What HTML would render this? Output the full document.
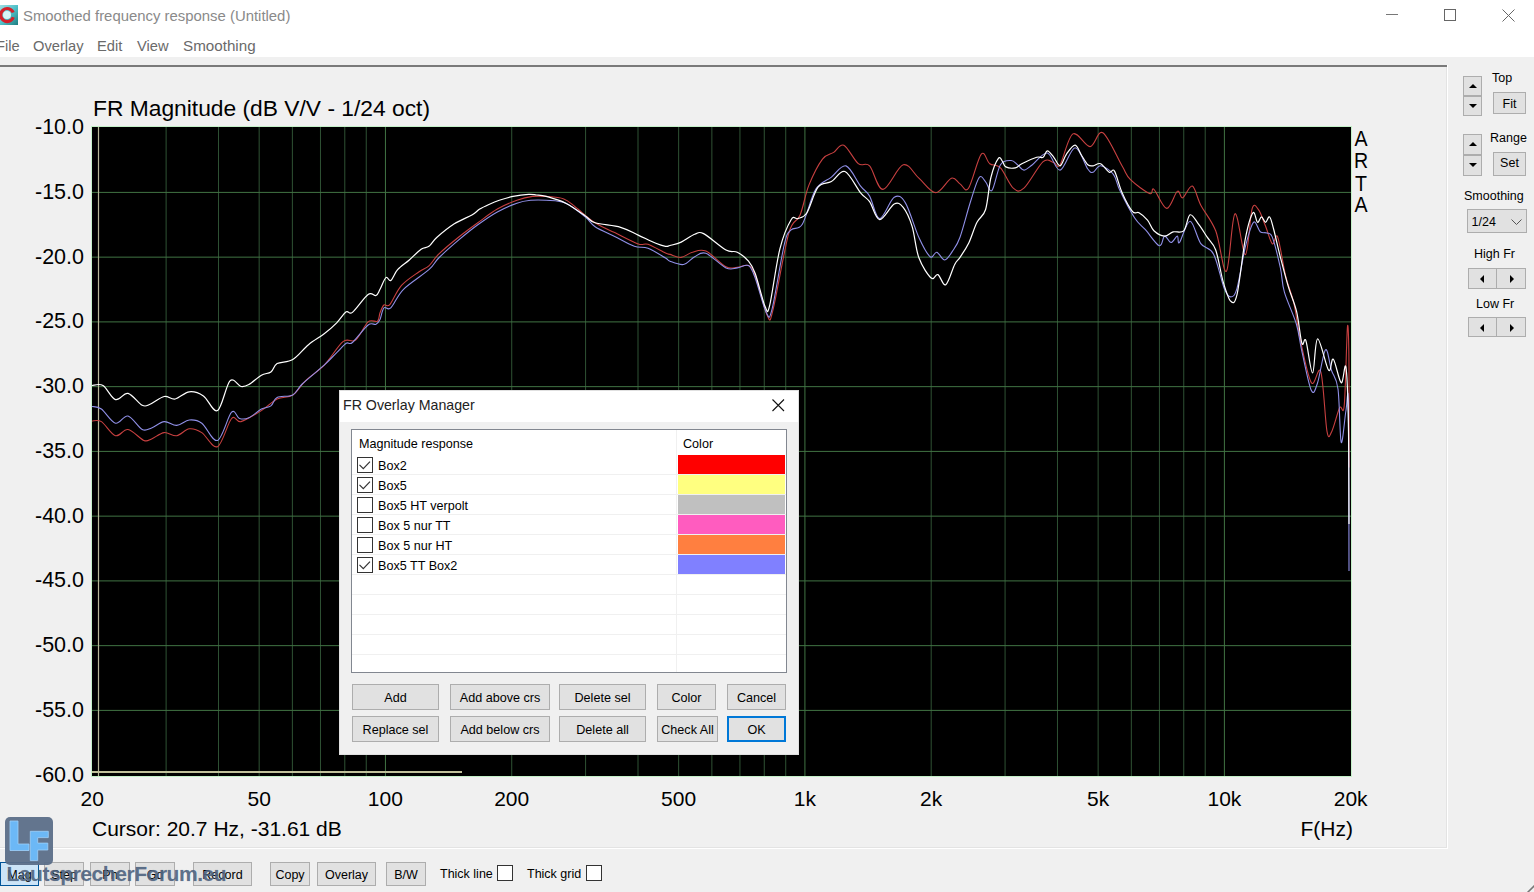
<!DOCTYPE html>
<html><head><meta charset="utf-8">
<style>
*{margin:0;padding:0;box-sizing:border-box}
html,body{width:1534px;height:892px;overflow:hidden}
body{position:relative;background:#f0f0f0;font-family:"Liberation Sans",sans-serif;color:#000}
.a{position:absolute;white-space:nowrap}
#top{position:absolute;left:0;top:0;width:1534px;height:57px;background:#fff}
.menu{position:absolute;top:37px;font-size:14.7px;color:#6a6a6a;line-height:18px}
.yl{position:absolute;left:0;width:84px;text-align:right;font-size:21.5px;line-height:25px}
.xl{position:absolute;top:786px;width:80px;text-align:center;font-size:21px;line-height:25px}
.pbtn{position:absolute;background:#e1e1e1;border:1px solid #adadad;font-size:12.5px;text-align:center;line-height:19px}
.spin{position:absolute;background:#e1e1e1;border:1px solid #adadad}
.tri-up{position:absolute;left:5px;top:7px;width:0;height:0;border-left:4px solid transparent;border-right:4px solid transparent;border-bottom:4px solid #000}
.tri-dn{position:absolute;left:5px;top:7px;width:0;height:0;border-left:4px solid transparent;border-right:4px solid transparent;border-top:4px solid #000}
.tri-l{position:absolute;top:5.5px;width:0;height:0;border-top:4.5px solid transparent;border-bottom:4.5px solid transparent;border-right:4.5px solid #000}
.tri-r{position:absolute;top:5.5px;width:0;height:0;border-top:4.5px solid transparent;border-bottom:4.5px solid transparent;border-left:4.5px solid #000}
.rl{position:absolute;font-size:12.5px;line-height:16px;color:#000}
.tb{position:absolute;top:862px;height:24px;background:#e1e1e1;border:1px solid #adadad;font-size:12.5px;text-align:center;line-height:24px}
#dlg{position:absolute;left:339px;top:390px;width:460px;height:365px;background:#f0f0f0;border:1px solid #e0e0e0}
#dlgt{position:absolute;left:0;top:0;width:458px;height:31px;background:#fff}
#lv{position:absolute;left:11px;top:38px;width:436px;height:244px;background:#fff;border:1px solid #828790;overflow:hidden}
.sw{position:absolute;left:326px;width:107px;height:19px}
.cb{position:absolute;left:5px;width:16px;height:16px;border:1px solid #333;background:#fff}
.rt{position:absolute;left:26px;font-size:12.6px;line-height:16px}
.rs{position:absolute;left:0;width:434px;height:1px;background:#f0f0f0}
.db{position:absolute;height:26px;background:#e1e1e1;border:1px solid #adadad;font-size:12.6px;text-align:center;line-height:27px}
</style></head><body>
<div id="top"></div>
<svg class="a" style="left:0;top:5px" width="18" height="20" viewBox="0 0 18 20">
<defs><linearGradient id="ig" x1="0" y1="0" x2="1" y2="1"><stop offset="0" stop-color="#9fe0e6"/><stop offset="0.5" stop-color="#4fc0c8"/><stop offset="1" stop-color="#1f7c80"/></linearGradient></defs>
<rect x="0" y="0" width="18" height="20" fill="url(#ig)"/>
<circle cx="7" cy="10" r="4" fill="#d8f4f6"/>
<path d="M13.2 7.5 A6.5 6.5 0 1 0 13.3 12.3" fill="none" stroke="#d4202a" stroke-width="3.2"/>
</svg>
<div class="a" style="left:23px;top:7px;font-size:14.9px;line-height:18px;color:#8a8a8a">Smoothed frequency response (Untitled)</div>
<svg class="a" style="left:1380px;top:8px" width="140" height="16">
<line x1="6" y1="6.5" x2="18" y2="6.5" stroke="#777" stroke-width="1"/>
<rect x="64.5" y="1.5" width="11" height="11" fill="none" stroke="#666" stroke-width="1"/>
<path d="M122.5 1.5 L134.5 13.5 M134.5 1.5 L122.5 13.5" stroke="#666" stroke-width="1"/>
</svg>
<div class="menu" style="left:-4px">File</div>
<div class="menu" style="left:33px">Overlay</div>
<div class="menu" style="left:97px">Edit</div>
<div class="menu" style="left:137px">View</div>
<div class="menu" style="left:183px;font-size:15.2px">Smoothing</div>
<!-- panel frame -->
<div class="a" style="left:0;top:65px;width:1447px;height:2px;background:#7a7a7a"></div>
<div class="a" style="left:1447px;top:65px;width:1px;height:784px;background:#fff"></div>
<div class="a" style="left:1446px;top:67px;width:1px;height:781px;background:#e3e3e3"></div>
<div class="a" style="left:0;top:848px;width:1448px;height:1px;background:#fff"></div>
<div class="a" style="left:0;top:847px;width:1447px;height:1px;background:#e3e3e3"></div>

<div class="a" style="left:93px;top:94px;font-size:22.8px;line-height:28px">FR Magnitude (dB V/V - 1/24 oct)</div>
<div class="yl" style="top:115.2px">-10.0</div><div class="yl" style="top:179.9px">-15.0</div><div class="yl" style="top:244.6px">-20.0</div><div class="yl" style="top:309.4px">-25.0</div><div class="yl" style="top:374.1px">-30.0</div><div class="yl" style="top:438.9px">-35.0</div><div class="yl" style="top:503.6px">-40.0</div><div class="yl" style="top:568.4px">-45.0</div><div class="yl" style="top:633.1px">-50.0</div><div class="yl" style="top:697.9px">-55.0</div><div class="yl" style="top:762.6px">-60.0</div>
<div class="xl" style="left:52.2px">20</div><div class="xl" style="left:219.2px">50</div><div class="xl" style="left:345.4px">100</div><div class="xl" style="left:471.7px">200</div><div class="xl" style="left:638.6px">500</div><div class="xl" style="left:764.9px">1k</div><div class="xl" style="left:891.2px">2k</div><div class="xl" style="left:1058.1px">5k</div><div class="xl" style="left:1184.4px">10k</div><div class="xl" style="left:1310.7px">20k</div>
<div class="a" style="left:92px;top:816px;font-size:21px;line-height:25px">Cursor: 20.7 Hz, -31.61 dB</div>
<div class="a" style="left:1300.5px;top:816px;font-size:21px;line-height:25px">F(Hz)</div>
<div class="a" style="left:1352.5px;top:127.8px;font-size:21.3px;line-height:21.8px;width:16px;text-align:center;white-space:normal;transform:scale(0.92,1.03);transform-origin:50% 0">A<br>R<br>T<br>A</div>

<svg class="a" style="left:0;top:0" width="1534" height="892">
<rect x="91.5" y="126.5" width="1260" height="650" fill="#000" stroke="#c4f0c8" stroke-width="1"/>
<g stroke="#2f5234" stroke-width="1"><line x1="166.11" y1="127" x2="166.11" y2="776"/><line x1="218.52" y1="127" x2="218.52" y2="776"/><line x1="259.17" y1="127" x2="259.17" y2="776"/><line x1="292.38" y1="127" x2="292.38" y2="776"/><line x1="320.47" y1="127" x2="320.47" y2="776"/><line x1="344.79" y1="127" x2="344.79" y2="776"/><line x1="366.25" y1="127" x2="366.25" y2="776"/><line x1="511.72" y1="127" x2="511.72" y2="776"/><line x1="585.59" y1="127" x2="585.59" y2="776"/><line x1="638.00" y1="127" x2="638.00" y2="776"/><line x1="678.65" y1="127" x2="678.65" y2="776"/><line x1="711.86" y1="127" x2="711.86" y2="776"/><line x1="739.95" y1="127" x2="739.95" y2="776"/><line x1="764.27" y1="127" x2="764.27" y2="776"/><line x1="785.73" y1="127" x2="785.73" y2="776"/><line x1="931.20" y1="127" x2="931.20" y2="776"/><line x1="1005.07" y1="127" x2="1005.07" y2="776"/><line x1="1057.48" y1="127" x2="1057.48" y2="776"/><line x1="1098.13" y1="127" x2="1098.13" y2="776"/><line x1="1131.34" y1="127" x2="1131.34" y2="776"/><line x1="1159.43" y1="127" x2="1159.43" y2="776"/><line x1="1183.75" y1="127" x2="1183.75" y2="776"/><line x1="1205.21" y1="127" x2="1205.21" y2="776"/></g>
<g stroke="#417444" stroke-width="1"><line x1="385.44" y1="127" x2="385.44" y2="776"/><line x1="804.92" y1="127" x2="804.92" y2="776"/><line x1="1224.40" y1="127" x2="1224.40" y2="776"/><line x1="92" y1="192.40" x2="1351" y2="192.40"/><line x1="92" y1="257.15" x2="1351" y2="257.15"/><line x1="92" y1="321.90" x2="1351" y2="321.90"/><line x1="92" y1="386.65" x2="1351" y2="386.65"/><line x1="92" y1="451.40" x2="1351" y2="451.40"/><line x1="92" y1="516.15" x2="1351" y2="516.15"/><line x1="92" y1="580.90" x2="1351" y2="580.90"/><line x1="92" y1="645.65" x2="1351" y2="645.65"/><line x1="92" y1="710.40" x2="1351" y2="710.40"/></g>
<line x1="98.5" y1="127" x2="98.5" y2="776" stroke="#b8b898" stroke-width="1.2"/>
<line x1="92" y1="772" x2="462" y2="772" stroke="#c0c09a" stroke-width="2"/>
<path fill="none" stroke="#c84040" stroke-width="1.1" d="M92.0 421.0 C93.6 421.1 97.5 419.2 101.4 421.6 C105.3 424.1 111.1 434.4 115.5 435.7 C119.9 437.0 123.3 428.7 128.0 429.5 C132.7 430.3 139.9 438.8 143.8 440.4 C147.7 442.0 148.2 440.2 151.6 438.9 C155.0 437.6 160.0 433.1 164.2 432.6 C168.4 432.1 172.5 436.3 176.7 435.7 C180.9 435.1 185.1 429.3 189.3 428.8 C193.5 428.3 197.1 429.6 201.8 432.6 C206.5 435.6 212.5 449.1 217.5 446.7 C222.5 444.3 227.7 422.7 231.6 418.5 C235.5 414.3 236.0 422.9 241.0 421.6 C246.0 420.3 255.4 414.4 261.4 410.6 C267.4 406.8 271.9 401.6 277.1 399.0 C282.3 396.4 288.1 398.0 292.8 395.0 C297.5 392.0 300.2 385.8 305.4 380.8 C310.6 375.8 317.9 371.6 324.2 365.1 C330.5 358.6 337.8 345.8 343.0 341.6 C348.2 337.4 351.4 343.3 355.6 340.0 C359.8 336.7 364.5 324.9 368.1 321.8 C371.8 318.7 375.5 322.7 377.5 321.2 C379.5 319.7 378.9 315.5 380.0 312.8 C381.1 310.1 382.3 306.4 383.9 305.0 C385.5 303.6 386.9 307.9 389.8 304.6 C392.7 301.3 396.6 290.9 401.5 285.4 C406.4 279.9 414.5 275.0 419.1 271.7 C423.7 268.4 425.6 268.7 428.9 265.8 C432.2 262.9 433.8 258.8 438.7 254.1 C443.6 249.4 451.7 242.7 458.2 237.5 C464.7 232.3 471.3 227.5 477.8 222.8 C484.3 218.1 490.8 212.8 497.3 209.1 C503.8 205.3 511.0 202.4 516.9 200.3 C522.8 198.2 527.7 197.1 532.6 196.4 C537.5 195.8 541.0 196.0 546.2 196.4 C551.4 196.8 558.9 197.1 563.8 198.9 C568.7 200.7 570.4 203.2 575.6 207.2 C580.8 211.2 588.6 218.6 595.1 222.8 C601.6 227.0 607.5 229.1 614.7 232.6 C621.9 236.1 632.7 241.9 638.2 243.9 C643.8 245.9 643.5 242.8 648.0 244.3 C652.5 245.8 661.8 251.4 665.5 253.1 C669.2 254.8 667.4 253.7 670.0 254.4 C672.6 255.1 677.5 257.8 681.2 257.4 C684.9 257.0 688.3 253.2 692.4 252.2 C696.5 251.1 700.3 248.7 705.9 251.1 C711.5 253.5 720.8 264.1 726.0 266.8 C731.2 269.5 733.5 267.4 737.3 267.2 C741.0 267.0 745.5 264.2 748.5 265.6 C751.5 267.0 752.0 267.3 755.2 275.7 C758.4 284.1 764.5 310.5 767.5 316.1 C770.5 321.7 769.6 323.2 773.1 309.4 C776.6 295.6 784.3 248.8 788.8 233.1 C793.3 217.4 796.6 223.2 800.0 215.2 C803.4 207.2 805.2 194.2 809.0 184.9 C812.8 175.6 818.4 164.5 822.5 159.1 C826.6 153.7 830.2 154.7 833.7 152.4 C837.2 150.1 839.7 143.3 843.8 145.2 C847.9 147.1 854.0 160.1 858.3 163.6 C862.6 167.1 865.5 161.6 869.6 165.9 C873.7 170.2 877.4 189.6 883.0 189.4 C888.6 189.2 897.2 166.7 903.2 164.8 C909.2 162.9 913.5 173.5 918.9 178.2 C924.3 182.9 930.3 192.8 935.7 192.8 C941.1 192.8 947.4 179.7 951.4 178.2 C955.4 176.7 957.1 182.2 960.0 183.9 C962.9 185.6 965.0 193.2 968.5 188.2 C972.0 183.2 977.8 158.2 981.3 154.1 C984.8 150.0 986.6 161.4 989.8 163.7 C993.0 166.0 996.6 163.8 1000.5 167.9 C1004.4 172.0 1009.4 184.8 1013.3 188.2 C1017.2 191.6 1018.9 192.6 1023.9 188.2 C1028.9 183.8 1038.1 165.9 1043.1 161.6 C1048.1 157.3 1051.0 162.1 1053.8 162.6 C1056.6 163.1 1056.9 169.5 1060.1 164.7 C1063.3 159.9 1067.9 136.9 1072.9 133.9 C1077.9 130.9 1085.0 146.8 1090.0 146.6 C1095.0 146.4 1097.5 129.6 1102.8 132.8 C1108.1 136.0 1117.4 158.0 1122.0 165.8 C1126.6 173.6 1125.9 175.1 1130.5 179.7 C1135.1 184.3 1145.7 191.9 1149.6 193.5 C1153.5 195.1 1151.1 186.8 1153.9 189.3 C1156.8 191.8 1162.8 208.1 1166.7 208.4 C1170.6 208.8 1174.6 193.2 1177.3 191.4 C1180.0 189.6 1180.2 198.7 1182.7 197.8 C1185.2 196.9 1189.3 184.9 1192.3 186.1 C1195.3 187.3 1196.9 197.8 1200.8 205.2 C1204.7 212.6 1211.4 219.8 1215.7 230.8 C1220.0 241.8 1223.2 274.1 1226.4 271.3 C1229.6 268.5 1231.7 216.6 1234.9 213.8 C1238.1 211.0 1242.5 255.4 1245.4 254.6 C1248.3 253.8 1249.9 216.2 1252.1 208.8 C1254.3 201.4 1256.5 207.3 1258.8 210.2 C1261.0 213.1 1263.3 220.7 1265.6 226.3 C1267.8 231.9 1270.3 242.0 1272.3 243.8 C1274.3 245.6 1275.5 231.7 1277.7 237.1 C1279.9 242.5 1283.0 265.1 1285.7 276.1 C1288.4 287.1 1291.3 292.2 1293.8 303.0 C1296.3 313.8 1297.6 327.4 1300.5 340.7 C1303.4 354.0 1308.0 377.6 1311.4 382.8 C1314.8 388.0 1318.2 363.7 1320.8 371.8 C1323.4 379.9 1325.2 421.5 1327.0 431.4 C1328.8 441.3 1329.7 435.3 1331.8 431.4 C1333.9 427.5 1337.5 412.2 1339.6 407.8 C1341.7 403.4 1343.0 418.3 1344.3 404.7 C1345.6 391.1 1346.7 332.6 1347.5 326.3 C1348.3 320.0 1348.8 343.5 1349.0 367.0 C1349.2 390.5 1349.0 450.8 1349.0 467.5"/>
<path fill="none" stroke="#9090e8" stroke-width="1.1" d="M92.0 406.5 C93.6 406.9 97.5 406.2 101.4 409.0 C105.3 411.8 111.1 422.0 115.5 423.2 C119.9 424.4 123.5 414.9 128.0 416.0 C132.4 417.1 138.3 427.5 142.2 429.5 C146.1 431.5 147.9 429.2 151.6 427.9 C155.3 426.6 160.0 422.0 164.2 421.6 C168.4 421.2 172.5 425.7 176.7 425.4 C180.9 425.1 185.1 420.4 189.3 420.0 C193.5 419.6 197.1 419.8 201.8 423.2 C206.5 426.6 212.5 442.2 217.5 440.4 C222.5 438.6 227.9 415.8 231.6 412.2 C235.3 408.6 236.6 417.6 239.5 418.5 C242.4 419.4 245.2 419.4 248.9 417.8 C252.6 416.2 257.7 411.0 261.4 409.0 C265.1 407.0 268.3 407.8 270.9 405.9 C273.5 404.0 273.5 399.2 277.1 397.4 C280.8 395.6 288.6 397.1 292.8 394.9 C297.0 392.7 297.0 389.0 302.2 384.0 C307.4 379.0 318.4 370.3 324.2 365.1 C329.9 359.9 333.0 356.2 336.7 352.6 C340.4 349.0 343.6 344.9 346.2 343.2 C348.8 341.5 348.8 345.5 352.4 342.5 C356.0 339.5 364.2 328.0 368.1 325.0 C372.0 322.0 374.0 325.2 376.0 324.3 C378.0 323.4 378.7 322.3 380.0 319.6 C381.3 316.9 382.1 309.8 383.9 307.9 C385.7 305.9 387.5 311.0 390.8 307.9 C394.1 304.8 397.1 295.7 403.5 289.3 C409.9 282.9 423.0 274.9 428.9 269.7 C434.8 264.5 433.8 262.9 438.7 258.0 C443.6 253.1 451.7 245.9 458.2 240.4 C464.7 234.9 471.3 229.5 477.8 224.8 C484.3 220.1 490.8 215.6 497.3 212.0 C503.8 208.4 511.3 205.1 516.9 203.2 C522.4 201.2 525.7 200.8 530.6 200.3 C535.5 199.8 540.3 199.8 546.2 200.3 C552.1 200.8 559.3 200.4 565.8 203.2 C572.3 206.0 580.5 213.1 585.4 217.0 C590.3 220.9 590.2 223.4 595.1 226.7 C600.0 229.9 608.2 233.2 614.7 236.5 C621.2 239.8 628.8 244.4 634.3 246.3 C639.8 248.2 642.8 246.2 648.0 248.2 C653.2 250.1 661.8 255.8 665.5 258.0 C669.2 260.2 667.0 260.1 670.0 261.2 C673.0 262.3 679.4 265.2 683.5 264.5 C687.6 263.8 691.0 258.6 694.7 256.7 C698.4 254.8 700.7 251.4 705.9 253.3 C711.1 255.2 720.8 265.5 726.0 267.9 C731.2 270.3 733.5 268.3 737.3 267.9 C741.0 267.5 745.5 263.9 748.5 265.6 C751.5 267.3 752.2 270.1 755.2 278.0 C758.2 285.9 763.6 307.5 766.4 312.7 C769.2 317.9 769.0 320.8 772.0 309.4 C775.0 298.0 781.1 257.6 784.3 244.3 C787.5 231.0 788.1 233.2 791.1 229.8 C794.1 226.5 798.2 230.9 802.3 224.2 C806.4 217.5 810.9 197.2 815.7 189.4 C820.6 181.6 826.4 181.0 831.4 177.1 C836.4 173.2 841.1 164.4 846.0 165.9 C850.9 167.4 856.7 181.1 860.6 186.1 C864.5 191.1 866.4 190.7 869.6 196.1 C872.8 201.5 875.5 218.4 879.6 218.6 C883.7 218.8 889.9 199.9 894.2 197.3 C898.5 194.7 901.3 196.2 905.4 202.9 C909.5 209.6 914.8 228.6 918.9 237.6 C923.0 246.6 927.1 254.3 930.1 256.7 C933.1 259.1 934.4 251.6 936.8 252.2 C939.2 252.8 942.1 260.2 944.7 260.0 C947.3 259.8 950.0 254.9 952.5 251.1 C955.0 247.3 957.0 245.5 960.0 237.2 C963.0 228.8 967.5 210.9 970.7 201.0 C973.9 191.1 976.7 180.7 979.2 177.5 C981.7 174.3 983.5 179.7 985.6 181.8 C987.7 183.9 989.5 193.2 992.0 190.3 C994.5 187.5 997.3 169.7 1000.5 164.7 C1003.7 159.7 1008.3 160.5 1011.1 160.5 C1013.9 160.5 1015.4 163.1 1017.5 164.7 C1019.6 166.3 1021.4 170.1 1023.9 170.1 C1026.4 170.1 1028.5 167.5 1032.4 164.7 C1036.3 161.8 1042.8 152.1 1047.4 153.0 C1052.0 153.9 1055.5 171.0 1060.1 170.1 C1064.7 169.2 1070.5 147.9 1075.1 147.7 C1079.7 147.5 1084.8 164.9 1087.8 169.0 C1090.8 173.1 1091.1 172.7 1093.2 172.2 C1095.3 171.7 1097.2 165.5 1100.6 165.8 C1104.0 166.2 1110.2 170.2 1113.4 174.3 C1116.6 178.4 1116.2 183.0 1119.8 190.3 C1123.3 197.6 1130.4 211.4 1134.7 218.0 C1139.0 224.6 1141.3 225.1 1145.4 229.7 C1149.5 234.3 1156.0 244.6 1159.2 245.7 C1162.4 246.8 1162.6 236.6 1164.6 236.1 C1166.6 235.6 1168.9 242.5 1171.0 242.5 C1173.1 242.5 1175.9 236.1 1177.3 236.1 C1178.7 236.1 1177.4 245.0 1179.5 242.5 C1181.6 240.0 1186.5 221.0 1190.1 221.2 C1193.6 221.4 1196.9 238.1 1200.8 243.6 C1204.7 249.1 1209.7 246.8 1213.6 254.2 C1217.5 261.6 1221.4 281.2 1224.2 288.3 C1227.0 295.4 1228.5 296.9 1230.6 296.9 C1232.7 296.9 1234.5 296.7 1237.0 288.3 C1239.5 279.9 1242.7 257.5 1245.4 246.5 C1248.2 235.5 1251.0 224.8 1253.5 222.3 C1256.0 219.8 1258.0 229.9 1260.2 231.7 C1262.4 233.5 1264.9 232.1 1266.9 233.0 C1268.9 233.9 1270.0 231.3 1272.3 237.1 C1274.5 242.9 1278.4 258.8 1280.4 268.0 C1282.4 277.2 1281.7 282.8 1284.4 292.2 C1287.1 301.6 1293.6 314.6 1296.5 324.5 C1299.4 334.4 1299.4 340.4 1301.9 351.4 C1304.4 362.4 1308.8 385.4 1311.4 390.6 C1314.0 395.8 1315.2 389.5 1317.6 382.7 C1319.9 375.9 1323.2 351.9 1325.5 349.8 C1327.8 347.7 1329.4 363.8 1331.5 370.3 C1333.6 376.8 1336.4 377.0 1338.0 389.0 C1339.6 401.0 1339.9 438.7 1341.2 442.4 C1342.5 446.1 1344.7 417.3 1345.9 411.0 C1347.1 404.7 1347.9 378.0 1348.4 404.7 C1348.9 431.4 1348.9 543.3 1349.0 571.0"/>
<path fill="none" stroke="#ffffff" stroke-width="1.2" d="M92.0 385.5 C93.8 385.5 99.1 383.1 103.0 385.5 C106.9 387.9 111.3 398.3 115.5 399.6 C119.7 400.9 123.5 392.4 128.0 393.4 C132.4 394.3 138.5 403.5 142.2 405.3 C145.9 407.1 146.3 405.8 150.0 404.3 C153.7 402.8 160.0 397.4 164.2 396.5 C168.4 395.6 171.0 399.8 175.2 399.0 C179.4 398.2 184.6 392.3 189.3 391.8 C194.0 391.3 198.7 392.8 203.4 395.9 C208.1 399.0 213.1 413.1 217.5 410.6 C221.9 408.1 226.1 384.8 230.0 380.8 C233.9 376.8 237.8 385.9 241.0 386.5 C244.2 387.1 245.5 386.5 248.9 384.6 C252.3 382.7 257.7 377.3 261.4 375.2 C265.1 373.1 268.3 373.9 270.9 372.0 C273.5 370.1 273.5 365.7 277.1 363.6 C280.8 361.5 287.6 362.6 292.8 359.5 C298.0 356.4 303.3 349.0 308.5 344.7 C313.7 340.4 319.5 337.4 324.2 333.8 C328.9 330.2 333.0 326.5 336.7 322.8 C340.4 319.1 343.6 313.5 346.2 311.8 C348.8 310.1 348.8 315.3 352.4 312.4 C356.0 309.5 364.2 297.3 368.1 294.5 C372.0 291.7 374.0 296.4 376.0 295.5 C378.0 294.6 378.4 292.3 380.0 289.3 C381.6 286.3 384.1 279.1 385.9 277.6 C387.7 276.1 388.9 281.8 390.8 280.5 C392.8 279.2 394.5 273.1 397.6 269.7 C400.7 266.3 405.4 263.4 409.3 260.0 C413.2 256.6 417.8 251.5 421.1 249.2 C424.4 246.9 426.3 248.2 428.9 246.3 C431.5 244.4 432.5 241.2 436.7 237.5 C440.9 233.8 448.4 227.6 454.3 223.8 C460.2 220.1 467.7 217.4 471.9 215.0 C476.1 212.6 476.8 210.9 479.7 209.1 C482.6 207.3 486.2 205.7 489.5 204.2 C492.8 202.7 495.4 201.6 499.3 200.3 C503.2 199.0 508.1 197.4 513.0 196.4 C517.9 195.4 524.7 194.6 528.6 194.4 C532.5 194.2 533.6 194.7 536.5 195.0 C539.4 195.3 541.3 195.0 546.2 196.4 C551.1 197.8 559.3 199.9 565.8 203.2 C572.3 206.5 580.5 212.7 585.4 216.0 C590.3 219.3 589.2 220.9 595.1 222.8 C601.0 224.7 613.4 225.2 620.6 227.3 C627.8 229.4 632.3 232.4 638.2 235.1 C644.1 237.8 651.2 241.4 655.8 243.3 C660.3 245.2 663.1 245.9 665.5 246.3 C667.9 246.7 667.4 246.2 670.0 245.5 C672.6 244.8 677.1 244.0 681.2 242.1 C685.3 240.2 691.0 235.7 694.7 234.3 C698.4 232.9 698.4 231.0 703.6 233.6 C708.8 236.2 720.4 246.9 726.0 250.0 C731.6 253.1 733.5 250.3 737.3 252.2 C741.0 254.1 745.5 257.6 748.5 261.2 C751.5 264.8 752.4 265.9 755.2 273.5 C758.0 281.1 762.9 301.9 765.3 307.1 C767.7 312.3 767.4 314.6 769.8 304.9 C772.2 295.2 776.3 263.0 779.9 248.8 C783.5 234.6 788.1 224.7 791.1 219.7 C794.1 214.7 795.2 219.7 797.8 218.6 C800.4 217.5 803.4 218.2 806.8 213.0 C810.2 207.8 813.9 192.4 818.0 187.2 C822.1 182.0 826.9 184.2 831.4 181.6 C835.9 179.0 840.0 169.6 844.9 171.5 C849.8 173.4 856.5 187.8 860.6 192.8 C864.7 197.8 866.4 197.2 869.6 201.7 C872.8 206.2 875.5 219.3 879.6 219.7 C883.7 220.1 890.3 206.1 894.2 204.0 C898.1 201.9 900.2 203.7 903.2 207.4 C906.2 211.1 909.5 218.0 912.1 226.4 C914.7 234.8 915.7 249.2 918.9 257.8 C922.1 266.4 928.0 275.2 931.2 278.0 C934.4 280.8 935.5 273.5 937.9 274.6 C940.3 275.7 943.0 286.4 945.8 284.7 C948.6 283.0 952.3 269.1 954.7 264.5 C957.1 259.9 957.7 260.9 960.0 257.4 C962.3 253.9 965.7 249.4 968.5 243.6 C971.3 237.8 974.1 228.0 977.0 222.3 C979.9 216.6 983.3 217.0 985.6 209.5 C987.9 202.0 988.8 186.0 990.9 177.5 C993.0 169.0 996.4 161.1 998.4 158.4 C1000.4 155.8 1001.4 160.2 1002.6 161.6 C1003.8 163.0 1003.7 165.8 1005.8 166.9 C1007.9 168.0 1012.7 168.4 1015.4 167.9 C1018.1 167.4 1018.2 165.5 1021.8 163.7 C1025.3 161.9 1033.2 158.4 1036.7 157.3 C1040.2 156.2 1041.3 158.4 1043.1 157.3 C1044.9 156.2 1045.6 150.9 1047.4 150.9 C1049.2 150.9 1051.7 154.8 1053.8 157.3 C1055.9 159.8 1058.0 166.3 1060.1 165.8 C1062.2 165.3 1064.0 157.6 1066.5 154.1 C1069.0 150.6 1072.6 144.9 1075.1 145.1 C1077.6 145.3 1079.4 151.9 1081.5 155.2 C1083.6 158.5 1085.8 162.9 1087.8 164.7 C1089.8 166.5 1091.1 166.0 1093.2 165.8 C1095.3 165.6 1097.9 162.6 1100.6 163.7 C1103.3 164.8 1106.9 171.0 1109.2 172.2 C1111.5 173.4 1112.4 167.7 1114.5 171.1 C1116.6 174.5 1119.0 185.7 1122.0 192.4 C1125.0 199.2 1129.8 208.2 1132.6 211.6 C1135.4 215.0 1136.5 211.3 1139.0 212.7 C1141.5 214.1 1145.0 217.1 1147.5 220.1 C1150.0 223.1 1151.1 228.1 1153.9 230.8 C1156.8 233.5 1161.4 235.9 1164.6 236.1 C1167.8 236.3 1169.9 232.8 1173.1 231.9 C1176.3 231.0 1180.9 233.7 1183.7 230.8 C1186.5 228.0 1187.6 215.9 1190.1 214.8 C1192.6 213.7 1195.8 220.7 1198.7 224.4 C1201.6 228.1 1204.4 232.9 1207.2 237.2 C1210.0 241.5 1213.0 242.6 1215.7 250.0 C1218.4 257.4 1220.7 273.4 1223.2 281.9 C1225.7 290.4 1228.3 299.0 1230.6 301.1 C1232.9 303.2 1234.5 305.1 1237.0 294.7 C1239.5 284.2 1242.8 252.0 1245.4 238.4 C1248.1 224.8 1250.9 215.6 1252.9 212.9 C1254.9 210.2 1256.1 221.6 1257.5 222.3 C1258.9 223.0 1260.2 216.9 1261.5 216.9 C1262.8 216.9 1264.2 222.3 1265.6 222.3 C1266.9 222.3 1268.3 215.8 1269.6 216.9 C1270.9 218.0 1271.8 222.3 1273.6 229.0 C1275.4 235.7 1277.9 247.7 1280.4 257.3 C1282.9 266.9 1285.7 277.9 1288.4 286.9 C1291.1 295.9 1294.2 301.7 1296.5 311.1 C1298.8 320.5 1300.3 338.4 1301.9 343.3 C1303.5 348.2 1304.1 335.8 1305.9 340.7 C1307.7 345.6 1310.6 373.3 1312.6 373.0 C1314.5 372.7 1314.9 339.3 1317.6 338.8 C1320.3 338.3 1326.0 366.8 1328.6 370.2 C1331.2 373.6 1331.2 357.1 1333.3 359.2 C1335.4 361.3 1339.1 381.5 1341.2 382.8 C1343.3 384.1 1344.7 360.2 1345.9 367.0 C1347.1 373.8 1347.9 397.3 1348.4 423.5 C1348.9 449.7 1348.9 507.2 1349.0 524.0"/>
</svg>

<!-- right panel -->
<div class="spin" style="left:1463px;top:76px;width:19px;height:20px"><div class="tri-up"></div></div>
<div class="spin" style="left:1463px;top:96px;width:19px;height:20px"><div class="tri-dn"></div></div>
<div class="rl" style="left:1492px;top:70px">Top</div>
<div class="pbtn" style="left:1493px;top:92px;width:33px;height:22px;line-height:22px">Fit</div>
<div class="spin" style="left:1463px;top:134px;width:19px;height:21px"><div class="tri-up"></div></div>
<div class="spin" style="left:1463px;top:155px;width:19px;height:21px"><div class="tri-dn"></div></div>
<div class="rl" style="left:1490px;top:130px">Range</div>
<div class="pbtn" style="left:1493px;top:152px;width:33px;height:24px;line-height:21px">Set</div>
<div class="rl" style="left:1464px;top:188px">Smoothing</div>
<div class="pbtn" style="left:1467px;top:209px;width:60px;height:24px;text-align:left;padding-left:3.5px;line-height:24px">1/24
<svg class="a" style="left:43px;top:9px" width="11" height="7"><path d="M0.5 0.5 L5.5 5.5 L10.5 0.5" fill="none" stroke="#555"/></svg></div>
<div class="rl" style="left:1474px;top:246px">High Fr</div>
<div class="spin" style="left:1468px;top:268px;width:29px;height:21px"><div class="tri-l" style="left:11px"></div></div>
<div class="spin" style="left:1496px;top:268px;width:30px;height:21px"><div class="tri-r" style="left:13px"></div></div>
<div class="rl" style="left:1476px;top:296px">Low Fr</div>
<div class="spin" style="left:1468px;top:317px;width:29px;height:20px"><div class="tri-l" style="left:11px"></div></div>
<div class="spin" style="left:1496px;top:317px;width:30px;height:20px"><div class="tri-r" style="left:13px"></div></div>
<svg class="a" style="left:1520px;top:878px" width="14" height="14"><path d="M14.5 7.5 L7.5 14.5" stroke="#777" stroke-width="1.6"/></svg>

<!-- bottom toolbar -->
<div class="tb" style="left:0;width:39px;background:#cce4f7;border-color:#005499">Mag</div>
<div class="tb" style="left:44px;width:40px">Step</div>
<div class="tb" style="left:90px;width:40px">Ph</div>
<div class="tb" style="left:135px;width:40px">Gd</div>
<div class="tb" style="left:193px;width:59px">Record</div>
<div class="tb" style="left:270px;width:40px">Copy</div>
<div class="tb" style="left:317px;width:59px">Overlay</div>
<div class="tb" style="left:386px;width:40px">B/W</div>
<div class="rl" style="left:440px;top:866px">Thick line</div>
<div class="a" style="left:497px;top:865px;width:16px;height:16px;border:1px solid #333;background:#fff"></div>
<div class="rl" style="left:527px;top:866px">Thick grid</div>
<div class="a" style="left:586px;top:865px;width:16px;height:16px;border:1px solid #333;background:#fff"></div>

<!-- watermark -->
<svg class="a" style="left:0;top:810px" width="260" height="82">
<rect x="5" y="7" width="48" height="48" rx="5" fill="#5b6e88" fill-opacity="0.95"/>
<path d="M10 11 H18 V34 H29 V40.5 H10 Z" fill="#6cb8f6" stroke="#9fd0fa" stroke-width="0.8"/>
<path d="M30.3 21.3 H48.3 V27.6 H37.7 V33.1 H47.8 V40 H37.7 V50.6 H30.3 Z" fill="#6cb8f6" stroke="#9fd0fa" stroke-width="0.8"/>
<text x="6.5" y="71" font-family="Liberation Sans" font-weight="bold" font-size="21" letter-spacing="-0.45" fill="#4f6480" fill-opacity="0.92" stroke="#4f6480" stroke-opacity="0.3" stroke-width="0.3">LautsprecherForum.eu</text>
</svg>

<!-- dialog -->
<div id="dlg">
<div id="dlgt"></div>
<div class="a" style="left:3px;top:5.3px;font-size:14.2px;line-height:18px;color:#222">FR Overlay Manager</div>
<svg class="a" style="left:432px;top:8px" width="14" height="14"><path d="M0.5 0.5 L12 12 M12 0.5 L0.5 12" stroke="#111" stroke-width="1.1"/></svg>
<div id="lv">
<div class="a" style="left:7px;top:5.7px;font-size:12.6px;line-height:16px">Magnitude response</div>
<div class="a" style="left:324px;top:0;width:1px;height:244px;background:#f0f0f0"></div>
<div class="a" style="left:331px;top:5.7px;font-size:12.6px;line-height:16px">Color</div>
<div class="sw" style="top:25px;background:#ff0000"></div><div class="cb" style="top:27px"><svg width=14 height=14 style="display:block"><path d="M1.5 6.8 L5.3 10.7 L12 3.7" stroke="#333" stroke-width="1.2" fill="none"/></svg></div><div class="rt" style="top:28px">Box2</div><div class="rs" style="top:44px"></div><div class="sw" style="top:45px;background:#ffff80"></div><div class="cb" style="top:47px"><svg width=14 height=14 style="display:block"><path d="M1.5 6.8 L5.3 10.7 L12 3.7" stroke="#333" stroke-width="1.2" fill="none"/></svg></div><div class="rt" style="top:48px">Box5</div><div class="rs" style="top:64px"></div><div class="sw" style="top:65px;background:#c0c0c0"></div><div class="cb" style="top:67px"></div><div class="rt" style="top:68px">Box5 HT verpolt</div><div class="rs" style="top:84px"></div><div class="sw" style="top:85px;background:#ff5cbf"></div><div class="cb" style="top:87px"></div><div class="rt" style="top:88px">Box 5 nur TT</div><div class="rs" style="top:104px"></div><div class="sw" style="top:105px;background:#ff7f40"></div><div class="cb" style="top:107px"></div><div class="rt" style="top:108px">Box 5 nur HT</div><div class="rs" style="top:124px"></div><div class="sw" style="top:125px;background:#8080ff"></div><div class="cb" style="top:127px"><svg width=14 height=14 style="display:block"><path d="M1.5 6.8 L5.3 10.7 L12 3.7" stroke="#333" stroke-width="1.2" fill="none"/></svg></div><div class="rt" style="top:128px">Box5 TT Box2</div><div class="rs" style="top:144px"></div><div class="rs" style="top:164px"></div><div class="rs" style="top:184px"></div><div class="rs" style="top:204px"></div><div class="rs" style="top:224px"></div>
</div>
<div class="db" style="left:12px;top:293px;width:87px">Add</div>
<div class="db" style="left:110px;top:293px;width:100px">Add above crs</div>
<div class="db" style="left:219px;top:293px;width:87px">Delete sel</div>
<div class="db" style="left:317px;top:293px;width:59px">Color</div>
<div class="db" style="left:387px;top:293px;width:59px">Cancel</div>
<div class="db" style="left:12px;top:325px;width:87px">Replace sel</div>
<div class="db" style="left:110px;top:325px;width:100px">Add below crs</div>
<div class="db" style="left:219px;top:325px;width:87px">Delete all</div>
<div class="db" style="left:317px;top:325px;width:61px">Check All</div>
<div class="db" style="left:387px;top:325px;width:59px;border:2px solid #0078d7;line-height:25px">OK</div>
</div>
</body></html>
